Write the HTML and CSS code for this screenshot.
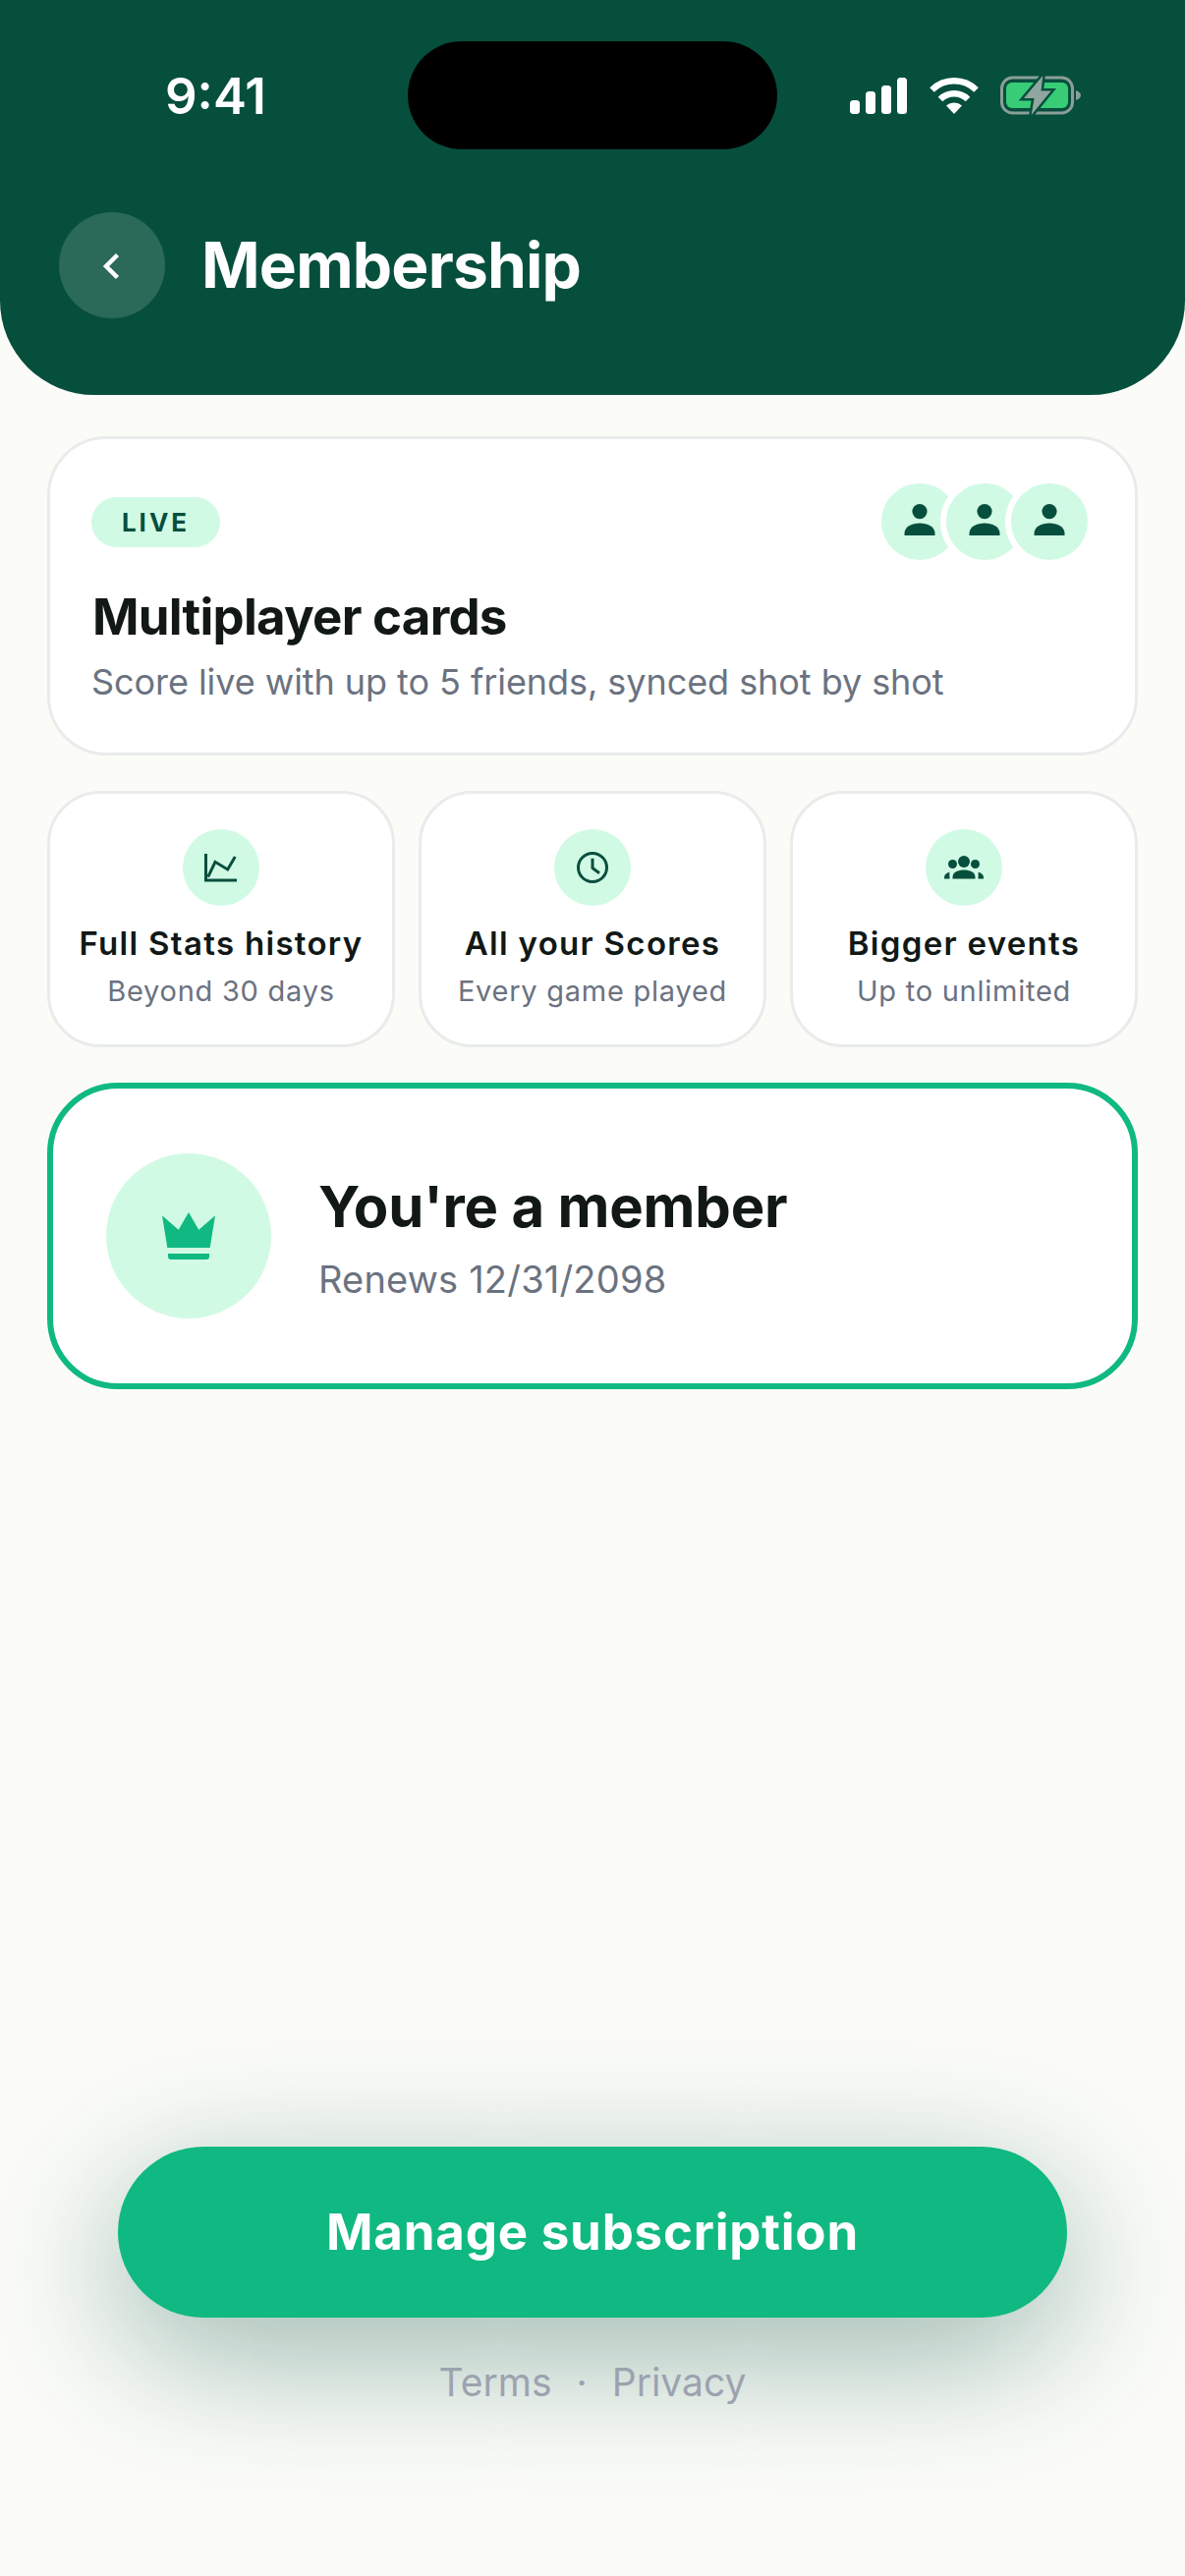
FILE: index.html
```html
<!DOCTYPE html>
<html lang="en">
<head>
    <meta charset="UTF-8">
    <meta name="viewport" content="width=device-width, initial-scale=1.0">
    <title>Membership</title>
    <link rel="stylesheet" href="styles.css">
</head>
<body>
    <div class="page">
        <header class="header">
            <div class="status-bar">
                <span class="status-time">9:41</span>
                <div class="island"></div>
                <div class="status-icons">
                    <svg class="icon-signal" viewBox="0 0 58 37">
                        <rect x="0" y="23" width="10" height="14" rx="3.5"/>
                        <rect x="16" y="14" width="10" height="23" rx="3.5"/>
                        <rect x="32" y="8" width="10" height="29" rx="3.5"/>
                        <rect x="48" y="0" width="10" height="37" rx="3.5"/>
                    </svg>
                    <svg class="icon-wifi" viewBox="0 0 50 37">
                        <path class="wifi-arc" d="M2.5 12.5A32 32 0 0 1 47.5 12.5"/>
                        <path class="wifi-arc" d="M11 22A20 20 0 0 1 39 22"/>
                        <path d="M25 37L17 28.5A12 12 0 0 1 33 28.5Z"/>
                    </svg>
                    <svg class="icon-battery" viewBox="0 0 82 42">
                        <rect class="battery-shell" x="1.5" y="3" width="72" height="36" rx="11"/>
                        <path class="battery-nub" d="M77 16c3 1 5 3 5 5s-2 4-5 5z"/>
                        <rect class="battery-fill" x="6" y="8" width="63" height="26" rx="6"/>
                        <path class="battery-bolt" d="M43.3 1L24 24h10.500L31.700 41 51.700 16.500H41.500z"/>
                    </svg>
                </div>
            </div>
            <div class="nav-row">
                <button class="back-btn">
                    <svg class="icon-back" viewBox="0 0 20 30"><path d="M15.500 4.500L4 16l11.500 11.500"/></svg>
                </button>
                <h1 class="page-title">Membership</h1>
            </div>
        </header>

        <main class="content">
            <section class="card live-card">
                <div class="live-top">
                    <span class="live-pill">LIVE</span>
                    <div class="avatars">
                        <div class="avatar">
                            <svg class="icon-person" viewBox="0 0 36 36"><circle cx="18" cy="7.6" r="7.6"/><path d="M2.5 32v-2C2.500 23 10 19.500 18 19.500S33.500 23 33.500 30v2z"/></svg>
                        </div>
                        <div class="avatar">
                            <svg class="icon-person" viewBox="0 0 36 36"><circle cx="18" cy="7.6" r="7.6"/><path d="M2.5 32v-2C2.500 23 10 19.500 18 19.500S33.500 23 33.500 30v2z"/></svg>
                        </div>
                        <div class="avatar">
                            <svg class="icon-person" viewBox="0 0 36 36"><circle cx="18" cy="7.6" r="7.6"/><path d="M2.5 32v-2C2.500 23 10 19.500 18 19.500S33.500 23 33.500 30v2z"/></svg>
                        </div>
                    </div>
                </div>
                <h2 class="live-title">Multiplayer cards</h2>
                <p class="live-sub">Score live with up to 5 friends, synced shot by shot</p>
            </section>

            <section class="perks">
                <div class="card perk">
                    <div class="perk-icon">
                        <svg class="icon-line" viewBox="0 0 36 36"><path d="M2.500 4v27H34"/><path d="M4.700 27.700L12 12.300 24.700 20 32.300 7"/></svg>
                    </div>
                    <h3 class="perk-title">Full Stats history</h3>
                    <p class="perk-sub">Beyond 30 days</p>
                </div>
                <div class="card perk">
                    <div class="perk-icon">
                        <svg class="icon-line" viewBox="0 0 36 36"><circle cx="18" cy="18" r="14.500"/><path d="M18 8.700v9.800l7 5.200"/></svg>
                    </div>
                    <h3 class="perk-title">All your Scores</h3>
                    <p class="perk-sub">Every game played</p>
                </div>
                <div class="card perk">
                    <div class="perk-icon">
                        <svg class="icon-group" viewBox="0 0 40 24">
                            <circle cx="20" cy="6" r="6"/>
                            <circle cx="8.500" cy="8.500" r="4.500"/>
                            <circle cx="31.500" cy="8.500" r="4.500"/>
                            <path d="M8.500 23.500v-2C8.500 17 14 14.500 20 14.500S31.500 17 31.500 21.500v2z"/>
                            <path d="M0 23.500V22c0-2.500 2-4.500 5.500-5.500-.5 1.500 0 3.500 0 7z"/>
                            <path d="M40 23.500V22c0-2.500-2-4.500-5.500-5.500.5 1.500 0 3.500 0 7z"/>
                        </svg>
                    </div>
                    <h3 class="perk-title">Bigger events</h3>
                    <p class="perk-sub">Up to unlimited</p>
                </div>
            </section>

            <section class="member-card">
                <div class="member-icon">
                    <svg class="icon-crown" viewBox="0 0 54 48">
                        <path d="M0 3.300L16.700 17.700 27 0l10.300 17.700L54 3.300 48.700 36H5.300z"/>
                        <path d="M6 42h42v3a3 3 0 0 1-3 3H9a3 3 0 0 1-3-3z"/>
                    </svg>
                </div>
                <div class="member-text">
                    <h2 class="member-title">You're a member</h2>
                    <p class="member-sub">Renews 12/31/2098</p>
                </div>
            </section>
        </main>

        <footer class="footer">
            <button class="manage-btn">Manage subscription</button>
            <div class="legal">
                <span>Terms</span>
                <span class="legal-dot">·</span>
                <span>Privacy</span>
            </div>
        </footer>
    </div>
</body>
</html>
```
FILE: styles.css
```css
* {
    box-sizing: border-box;
}
body {
    margin: 0;
    font-family: Inter, "Liberation Sans", sans-serif;
    background: #fbfcf8;
    color: #111816;
}
h1, h2, h3, p {
    margin: 0;
}
.page {
    display: flex;
    flex-direction: column;
    height: 2622px;
    overflow: hidden;
}

/* header */
.header {
    height: 402px;
    padding-top: 42px;
    background: #074f3d;
    border-radius: 0 0 96px 96px;
    color: #fff;
}
.status-bar {
    display: flex;
    align-items: center;
    height: 110px;
}
.status-time {
    width: 415px;
    padding-left: 168px;
    font-size: 51px;
    font-weight: 600;
}
.island {
    width: 376px;
    height: 110px;
    background: #000;
    border-radius: 55px;
}
.status-icons {
    display: flex;
    align-items: center;
    margin-left: 74px;
}
.icon-signal {
    width: 58px;
    height: 37px;
    fill: #fff;
}
.icon-wifi {
    width: 50px;
    height: 37px;
    margin-left: 23px;
    fill: #fff;
}
.wifi-arc {
    fill: none;
    stroke: #fff;
    stroke-width: 6.5;
}
.icon-battery {
    width: 82px;
    height: 42px;
    margin-left: 22px;
}
.battery-shell {
    fill: none;
    stroke: #8a9f98;
    stroke-width: 3;
}
.battery-nub {
    fill: #8a9f98;
}
.battery-fill {
    fill: #38cc77;
}
.battery-bolt {
    fill: #8fa79f;
    stroke: #074f3d;
    stroke-width: 5;
    paint-order: stroke;
}
.nav-row {
    display: flex;
    align-items: center;
    gap: 37px;
    margin-top: 64px;
    padding-left: 60px;
}
.back-btn {
    display: flex;
    align-items: center;
    justify-content: center;
    width: 108px;
    height: 108px;
    padding: 0;
    border: none;
    border-radius: 50%;
    background: rgba(255, 255, 255, 0.15);
}
.icon-back {
    width: 20px;
    height: 30px;
    fill: none;
    stroke: #fff;
    stroke-width: 4.5;
}
.page-title {
    font-size: 64px;
    line-height: 80px;
    font-weight: 700;
    letter-spacing: -0.8px;
}

/* cards */
.content {
    padding: 42px 48px 0;
}
.card {
    background: #fff;
    border: 3px solid #e8ecea;
}
.live-card {
    padding: 39px 42px 50px;
    border-radius: 60px;
}
.live-top {
    display: flex;
    align-items: center;
    justify-content: space-between;
}
.live-pill {
    width: 131px;
    height: 51px;
    font-size: 26px;
    line-height: 51px;
    font-weight: 700;
    letter-spacing: 3px;
    text-align: center;
    color: #074f3d;
    background: #d1fae5;
    border-radius: 26px;
}
.avatars {
    display: flex;
}
.avatar {
    display: flex;
    align-items: center;
    justify-content: center;
    width: 90px;
    height: 90px;
    margin-left: -24px;
    background: #d1fae5;
    border: 6px solid #fff;
    border-radius: 50%;
}
.icon-person {
    width: 36px;
    height: 36px;
    fill: #074f3d;
}
.live-title {
    margin-top: 21px;
    padding-left: 1px;
    font-size: 51px;
    line-height: 61px;
    font-weight: 700;
    letter-spacing: -0.75px;
}
.live-sub {
    margin-top: 14px;
    font-size: 36px;
    line-height: 44px;
    letter-spacing: -0.06px;
    color: #6b7280;
}
.perks {
    display: grid;
    grid-template-columns: repeat(3, 1fr);
    gap: 24px;
    margin-top: 36px;
}
.perk {
    display: flex;
    flex-direction: column;
    align-items: center;
    height: 261px;
    padding-top: 36px;
    border-radius: 54px;
}
.perk-icon {
    display: flex;
    align-items: center;
    justify-content: center;
    width: 78px;
    height: 78px;
    background: #d1fae5;
    border-radius: 50%;
}
.icon-line {
    width: 36px;
    height: 36px;
    fill: none;
    stroke: #074f3d;
    stroke-width: 3;
}
.icon-group {
    width: 40px;
    height: 24px;
    fill: #074f3d;
}
.perk-title {
    margin-top: 18px;
    font-size: 33px;
    line-height: 40px;
    font-weight: 600;
    letter-spacing: 1.3px;
}
.perk-sub {
    margin-top: 11px;
    font-size: 29px;
    line-height: 36px;
    letter-spacing: 0.75px;
    color: #6b7280;
}
.member-card {
    display: flex;
    align-items: center;
    gap: 48px;
    margin-top: 36px;
    padding: 66px 54px;
    background: #fff;
    border: 6px solid #10b981;
    border-radius: 72px;
}
.member-icon {
    display: flex;
    align-items: center;
    justify-content: center;
    width: 168px;
    height: 168px;
    background: #d1fae5;
    border-radius: 50%;
}
.icon-crown {
    width: 54px;
    height: 48px;
    fill: #10b981;
}
.member-text {
    padding-top: 2px;
}
.member-title {
    font-size: 58px;
    line-height: 70px;
    font-weight: 700;
    letter-spacing: -0.2px;
}
.member-sub {
    margin-top: 15px;
    font-size: 38px;
    line-height: 48px;
    letter-spacing: 0.2px;
    color: #6b7280;
}

/* bottom */
.footer {
    display: flex;
    flex-direction: column;
    align-items: center;
    margin-top: auto;
    padding-bottom: 173px;
}
.manage-btn {
    width: 966px;
    height: 174px;
    padding: 0 0 2px;
    border: none;
    border-radius: 87px;
    font-family: inherit;
    font-size: 51px;
    font-weight: 700;
    letter-spacing: 0.8px;
    color: #fff;
    background: #10b981;
    box-shadow: 0 36px 144px rgba(6, 78, 59, 0.4);
}
.legal {
    display: flex;
    gap: 25px;
    margin-top: 42px;
    font-size: 39px;
    line-height: 48px;
    color: #9ca3af;
}
```
